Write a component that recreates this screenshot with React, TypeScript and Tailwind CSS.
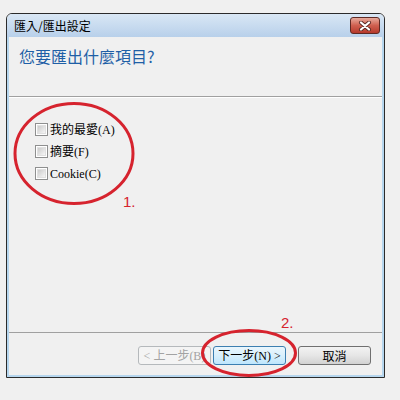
import React from "react";

const cjk = { fontFamily: '"Noto Sans CJK TC", "Noto Sans", sans-serif' };
const mixed = { fontFamily: '"Liberation Serif", "Noto Sans CJK TC", serif' };

function CheckRow({ label }: { label: string }) {
  return (
    <div className="flex items-center h-[13px]">
      <div className="w-[13px] h-[13px] border border-[#8e8f8f] bg-white p-[1px] shrink-0">
        <div className="w-full h-full bg-gradient-to-br from-[#cbcbcb] to-[#f6f6f6] border border-[#e0e0e0]" />
      </div>
      <span className="ml-[2px] text-[12px] leading-none text-black" style={mixed}>
        {label}
      </span>
    </div>
  );
}

export default function App() {
  return (
    <div className="relative w-[400px] h-[400px] bg-[#f0f0f0] pt-[13px] pl-[6px] overflow-hidden">
      <div className="w-[379px] h-[365px] border border-[#2b2b2b] rounded-t-[6px] flex flex-col overflow-hidden">
        {/* title bar */}
        <div className="h-[23px] shrink-0 bg-gradient-to-b from-[#d9e7f5] to-[#b8d0ea] flex items-center justify-between pl-[7px] pr-[4px]">
          <span className="text-[12px] leading-none text-black" style={cjk}>
            匯入/匯出設定
          </span>
          <div className="w-[30px] h-[17px] rounded-[3px] border border-[#5e2a24] bg-gradient-to-b from-[#e6a99c] via-[#cf5f4f] to-[#b6392b] flex items-center justify-center">
            <svg width="14" height="10" viewBox="0 0 14 10">
              <path d="M3 1.5 L11 8.5 M11 1.5 L3 8.5" stroke="#5a2a25" strokeWidth="4" strokeLinecap="round" />
              <path d="M3 1.5 L11 8.5 M11 1.5 L3 8.5" stroke="#ffffff" strokeWidth="2.2" strokeLinecap="round" />
            </svg>
          </div>
        </div>
        {/* body */}
        <div className="flex-1 flex flex-col border-x-2 border-b-2 border-[#b6d6ee] bg-[#f0f0f0]">
          <div className="h-[59px] shrink-0 pt-[8px] pl-[10px]">
            <span className="text-[16px] leading-[20px] text-[#1f5fa6]" style={cjk}>
              您要匯出什麼項目?
            </span>
          </div>
          <div className="h-px bg-[#a0a0a0] shrink-0" />
          <div className="h-px bg-white shrink-0" />
          <div className="flex flex-col gap-[9px] pt-[25px] pl-[26px]">
            <CheckRow label="我的最愛(A)" />
            <CheckRow label="摘要(F)" />
            <CheckRow label="Cookie(C)" />
          </div>
          <div className="flex-1" />
          <div className="h-px bg-[#a0a0a0] shrink-0" />
          <div className="flex justify-end items-start pt-[13px] pb-[10px] pr-[11px]">
            <div
              className="w-[73px] h-[19px] rounded-[3px] border border-[#b5b9bc] bg-[#f4f4f4] flex items-center justify-center text-[12px] leading-none text-[#a3a3a3]"
              style={mixed}
            >
              &lt; 上一步(B)
            </div>
            <div
              className="ml-[2px] w-[73px] h-[19px] rounded-[3px] border border-[#3c7fb1] bg-gradient-to-b from-[#eaf6fd] via-[#d9f0fc] to-[#bee6fd] flex items-center justify-center text-[12px] leading-none text-black"
              style={mixed}
            >
              下一步(N) &gt;
            </div>
            <div
              className="ml-[12px] w-[73px] h-[19px] rounded-[3px] border border-[#707070] bg-gradient-to-b from-[#f3f3f3] via-[#e6e6e6] to-[#d2d2d2] flex items-center justify-center text-[12px] leading-none text-black"
              style={cjk}
            >
              取消
            </div>
          </div>
        </div>
      </div>

      {/* annotations */}
      <svg className="absolute inset-0 pointer-events-none" width="400" height="400">
        <ellipse cx="74" cy="153.5" rx="59" ry="50" fill="none" stroke="#d6232e" strokeWidth="3" />
        <ellipse cx="249" cy="353" rx="46.5" ry="22.5" fill="none" stroke="#d6232e" strokeWidth="3" />
      </svg>
      <span
        className="absolute left-[123px] top-[194px] text-[15px] leading-none text-[#d6232e]"
        style={{ fontFamily: '"Liberation Sans", sans-serif' }}
      >
        1.
      </span>
      <span
        className="absolute left-[281px] top-[315px] text-[15px] leading-none text-[#d6232e]"
        style={{ fontFamily: '"Liberation Sans", sans-serif' }}
      >
        2.
      </span>
    </div>
  );
}
